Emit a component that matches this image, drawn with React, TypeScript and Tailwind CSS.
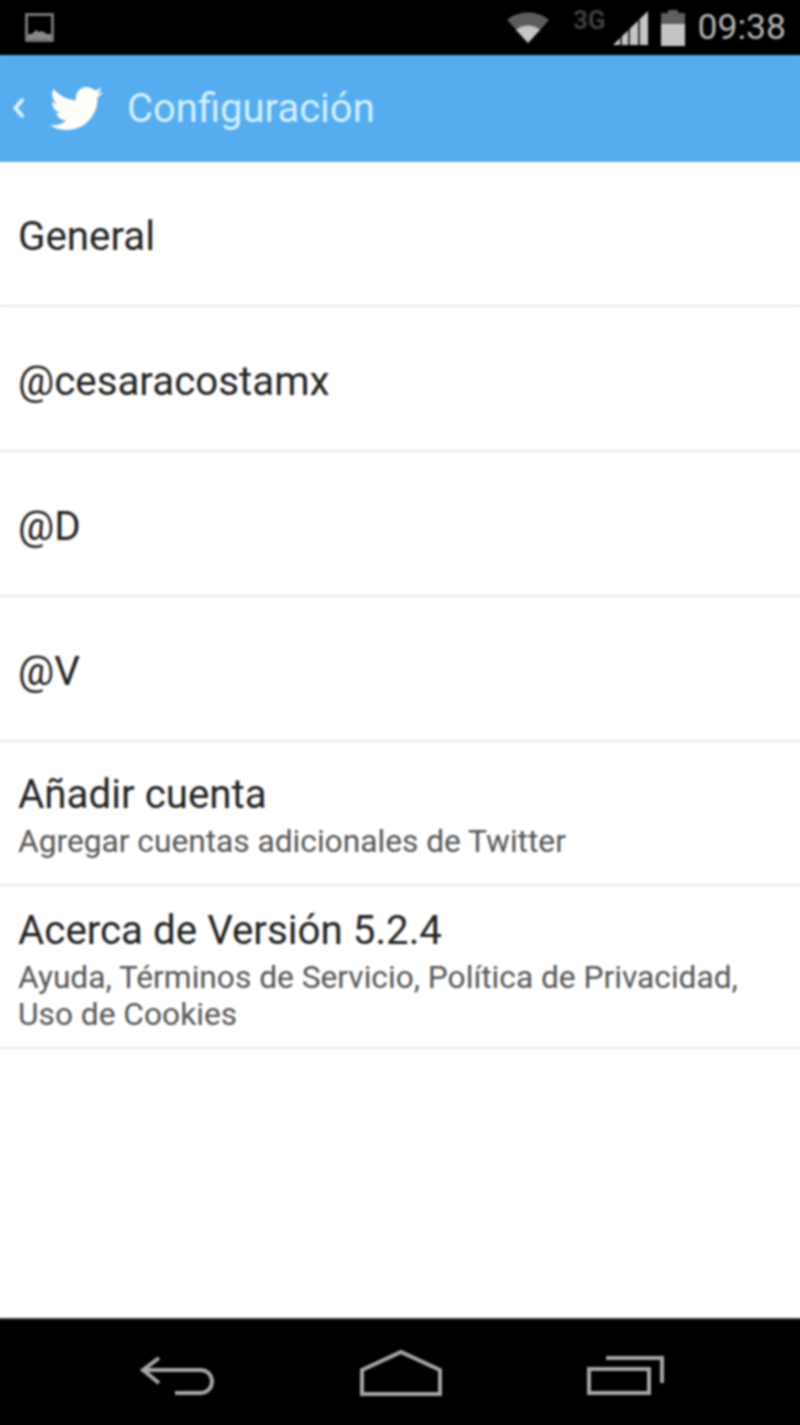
import React from 'react';
import { FaTwitter } from 'react-icons/fa';

type Row = { title: string; lines?: string[]; height: string; pad: string; leading: string };

const rows: Row[] = [
  { title: 'General', height: 'h-[145px]', pad: 'pt-[50px]', leading: 'leading-[50px]' },
  { title: '@cesaracostamx', height: 'h-[145px]', pad: 'pt-[50px]', leading: 'leading-[50px]' },
  { title: '@D', height: 'h-[145px]', pad: 'pt-[50px]', leading: 'leading-[50px]' },
  { title: '@V', height: 'h-[145px]', pad: 'pt-[50px]', leading: 'leading-[50px]' },
  { title: 'Añadir cuenta', lines: ['Agregar cuentas adicionales de Twitter'], height: 'h-[144px]', pad: 'pt-[24px]', leading: 'leading-[57px]' },
  {
    title: 'Acerca de Versión 5.2.4',
    lines: ['Ayuda, Términos de Servicio, Política de Privacidad,', 'Uso de Cookies'],
    height: 'h-[163px]',
    pad: 'pt-[16px]',
    leading: 'leading-[57px]',
  },
];

const StatusBar = () => (
  <div className="flex h-[55px] items-center justify-between bg-black pl-[25px] pr-[14px]">
    <svg width="30" height="30" viewBox="0 0 30 30" fill="none">
      <rect x="1.500" y="1.500" width="26" height="26" stroke="#8a8a8a" strokeWidth="2.500" />
      <rect x="3" y="21" width="23" height="5" fill="#8a8a8a" />
      <path d="M7 21l4-4 3 2 3-1 5 3z" fill="#8a8a8a" />
    </svg>
    <div className="flex items-center">
      <svg width="44" height="34" viewBox="0 0 44 34" className="mt-[-2px]">
        <path d="M1 10C12 0 32 0 43 10L22 33z" fill="#5c5c5c" />
        <path d="M10 20C16 14 28 14 34 20L22 33z" fill="#c4c4c4" />
      </svg>
      <span className="ml-[23px] mt-[-16px] text-[26px] font-bold leading-none text-[#3e3e3e]">3G</span>
      <svg width="37" height="36" viewBox="0 0 37 36" className="ml-[6px] mt-[1px]">
        <path d="M1 35L36 1v34z" fill="#c4c4c4" />
        <path d="M9 27v8M17 19v16M27 10v25" stroke="#000" strokeWidth="1.500" />
      </svg>
      <svg width="24" height="36" viewBox="0 0 24 36" className="ml-[12px] mt-[1px]">
        <path d="M7 0h10v3h7v11H0V3h7z" fill="#5f5f5f" />
        <rect x="0" y="14" width="24" height="22" fill="#c4c4c4" />
      </svg>
      <span className="ml-[13px] text-[35.500px] leading-none text-[#b5b5b5]">09:38</span>
    </div>
  </div>
);

const Header = () => (
  <div className="flex h-[107px] items-center bg-[#55acee] pl-[12px]">
    <svg width="14" height="24" viewBox="0 0 14 24" fill="none" className="mb-[2px]">
      <path d="M11 3L3.500 12L11 21" stroke="#d9f1ff" strokeWidth="4" />
    </svg>
    <FaTwitter className="ml-[24px] h-[53px] w-[53px] text-[#fffdf8]" />
    <span className="ml-[24px] text-[40px] leading-none text-[#d3f0ff]">Configuración</span>
  </div>
);

const NavBar = () => (
  <div className="flex h-[107px] items-center justify-between border-t-2 border-[#333] bg-black pl-[140px] pr-[136px]">
    <svg width="76" height="44" viewBox="0 0 76 44" fill="none" stroke="#a6a6a6" strokeWidth="4">
      <path d="M19 7L3 19l16 13" />
      <path d="M3 19h57c16 0 16 23 0 23H35" />
    </svg>
    <svg width="82" height="46" viewBox="0 0 82 46" fill="none" stroke="#a6a6a6" strokeWidth="4">
      <path d="M2 44V20L41 2l39 18v24z" />
    </svg>
    <svg width="78" height="44" viewBox="0 0 78 44" fill="none" stroke="#a6a6a6" strokeWidth="4">
      <rect x="3" y="18" width="60" height="24" />
      <path d="M20 7h56v25" />
    </svg>
  </div>
);

export default function App() {
  return (
    <div className="relative flex h-[1425px] w-[800px] flex-col bg-white font-['Roboto',sans-serif]">
      <StatusBar />
      <Header />
      <div className="flex-1">
        {rows.map((row) => (
          <div key={row.title} className={`${row.height} ${row.pad} border-b-2 border-[#e8e8e8] px-[18px]`}>
            <div className={`${row.leading} text-[40.300px] text-[#222]`}>{row.title}</div>
            {row.lines?.map((line) => (
              <div key={line} className="text-[31.7px] leading-[37px] text-[#555]">
                {line}
              </div>
            ))}
          </div>
        ))}
      </div>
      <NavBar />
      {/* the reference is a soft, upscaled capture */}
      <div className="absolute inset-0 backdrop-blur-[1px]" />
    </div>
  );
}
